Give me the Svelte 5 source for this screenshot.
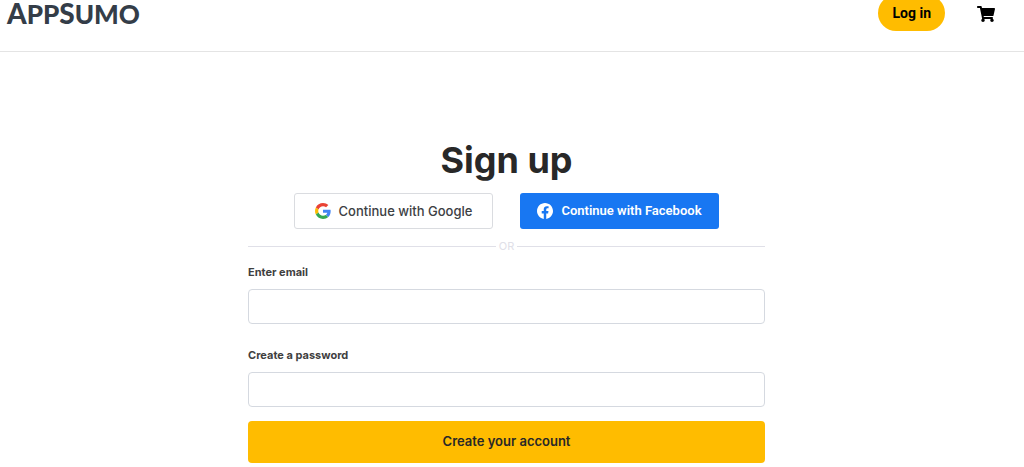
<script lang="ts">
  let email = $state('');
  let password = $state('');

  function submit(event: SubmitEvent) {
    event.preventDefault();
  }
</script>

<header class="site-header">
  <a class="logo" href="/" aria-label="AppSumo">A<span>PP</span>S<span>UMO</span></a>
  <nav class="actions">
    <button class="login" type="button">Log in</button>
    <a class="cart" href="/cart" aria-label="Cart">
      <svg viewBox="0 0 576 512" width="18" height="16" aria-hidden="true">
        <path
          d="M528.1 301.3l47.3-208C578.800 78.300 567.400 64 552 64H159.200l-9.200-44.800C147.800 8 137.900 0 126.500 0H24C10.700 0 0 10.700 0 24v16c0 13.300 10.700 24 24 24h69.900l70.200 343.400C147.300 417.100 136 435.200 136 456c0 30.900 25.100 56 56 56s56-25.100 56-56c0-15.700-6.400-29.800-16.800-40h209.600C430.400 426.200 424 440.300 424 456c0 30.900 25.100 56 56 56s56-25.100 56-56c0-22.200-12.900-41.300-31.600-50.400l5.500-24.300c3.400-15-8-29.300-23.400-29.300H218.100l-6.500-32h293.100c11.200 0 20.900-7.800 23.400-18.700z"
        />
      </svg>
    </a>
  </nav>
</header>

<main class="signup">
  <form class="signup-form" onsubmit={submit}>
    <h1>Sign up</h1>

    <div class="social">
      <button class="social-btn google" type="button">
        <svg viewBox="0 0 48 48" width="16" height="16" aria-hidden="true">
          <path fill="#ea4335" d="M24 9.500c3.540 0 6.710 1.220 9.210 3.600l6.850-6.850C35.900 2.380 30.470 0 24 0 14.620 0 6.510 5.380 2.560 13.220l7.980 6.190C12.430 13.720 17.740 9.500 24 9.500z" />
          <path fill="#4285f4" d="M46.980 24.550c0-1.570-.15-3.090-.38-4.550H24v9.020h12.940c-.58 2.960-2.260 5.480-4.780 7.180l7.730 6c4.510-4.180 7.090-10.360 7.090-17.650z" />
          <path fill="#fbbc05" d="M10.530 28.590c-.48-1.450-.76-2.990-.76-4.590s.27-3.140.76-4.590l-7.980-6.190C.92 16.460 0 20.120 0 24s.92 7.540 2.560 10.780l7.970-6.190z" />
          <path fill="#34a853" d="M24 48c6.480 0 11.930-2.130 15.890-5.810l-7.730-6c-2.150 1.450-4.920 2.300-8.160 2.300-6.260 0-11.570-4.220-13.470-9.910l-7.980 6.190C6.510 42.620 14.620 48 24 48z" />
        </svg>
        Continue with Google
      </button>
      <button class="social-btn facebook" type="button">
        <svg viewBox="0 0 24 24" width="16" height="16" aria-hidden="true">
          <path fill="#fff" d="M24 12.073C24 5.405 18.627 0 12 0S0 5.405 0 12.073C0 18.100 4.388 23.094 10.125 24v-8.437H7.078v-3.490h3.047V9.413c0-3.026 1.792-4.697 4.533-4.697 1.312 0 2.686.236 2.686.236v2.971H15.830c-1.491 0-1.956.931-1.956 1.886v2.264h3.328l-.532 3.490h-2.796V24C19.612 23.094 24 18.100 24 12.073z" />
        </svg>
        Continue with Facebook
      </button>
    </div>

    <div class="divider"><span>OR</span></div>

    <label for="email">Enter email</label>
    <input id="email" type="email" autocomplete="email" bind:value={email} />

    <label for="password">Create a password</label>
    <input id="password" type="password" autocomplete="new-password" bind:value={password} />

    <button class="submit" type="submit">Create your account</button>
  </form>
</main>

<style>
  :global(body) {
    margin: 0;
    background: #fff;
    color: #282828;
    font-family: Inter, 'Open Sans', sans-serif;
    overflow-x: hidden;
  }

  /* the bar starts slightly above the top of the page */
  .site-header {
    display: flex;
    align-items: flex-start;
    justify-content: space-between;
    box-sizing: border-box;
    height: 57px;
    margin-top: -5px;
    padding: 0 29px 0 7px;
    border-bottom: 1px solid #e4e4e4;
  }

  .logo {
    padding-top: 2px;
    color: #343d48;
    font-family: Lato, sans-serif;
    font-size: 28px;
    font-weight: 900;
    line-height: 32px;
    text-decoration: none;
  }

  .logo span {
    font-size: 26px;
  }

  .actions {
    display: flex;
    align-items: center;
    gap: 32px;
  }

  button {
    border: 0;
    cursor: pointer;
  }

  .login {
    height: 36px;
    padding: 0 14px;
    border-radius: 18px;
    background: #ffbc00;
    color: #000;
    font-family: Roboto, sans-serif;
    font-size: 14px;
    font-weight: 700;
  }

  .cart {
    display: flex;
    padding-top: 2px;
    color: #000;
  }

  .cart svg {
    fill: currentColor;
  }

  .signup {
    padding: 86px 11px 0 0;
  }

  .signup-form {
    display: flex;
    flex-direction: column;
    max-width: 517px;
    margin: 0 auto;
  }

  h1 {
    margin: 0 0 11px;
    font-size: 36px;
    font-weight: 700;
    line-height: 44px;
    text-align: center;
  }

  .social {
    display: flex;
    justify-content: center;
    gap: 27px;
  }

  .social-btn {
    display: flex;
    align-items: center;
    justify-content: center;
    gap: 8px;
    box-sizing: border-box;
    width: 199px;
    height: 36px;
    padding: 0;
    border-radius: 3px;
    font-size: 13px;
  }

  .google {
    border: 1px solid #dadce0;
    background: #fff;
    color: #3c4043;
    font-family: Inter, sans-serif;
    font-weight: 500;
  }

  .facebook {
    padding-bottom: 1px;
    background: #1877f2;
    color: #fff;
    font-family: Roboto, sans-serif;
    font-weight: 600;
  }

  .divider {
    display: flex;
    align-items: center;
    gap: 3px;
    margin: 9px 0 10px;
    color: #e0e0e8;
    font-size: 11px;
    line-height: 16px;
  }

  .divider::before,
  .divider::after {
    content: '';
    flex: 1;
    height: 1px;
    background: #e0e0e8;
  }

  label {
    margin-bottom: 9px;
    color: #3f3f3f;
    font-size: 11px;
    font-weight: 700;
    line-height: 16px;
  }

  input {
    box-sizing: border-box;
    width: 100%;
    height: 35px;
    margin: 0 0 23px;
    padding: 0 12px;
    border: 1px solid #d5d9e0;
    border-radius: 4px;
    background: #fff;
    font: inherit;
    font-size: 14px;
  }

  #password {
    margin-bottom: 14px;
  }

  .submit {
    height: 42px;
    padding-bottom: 3px;
    border-radius: 4px;
    background: #ffbc00;
    color: #282828;
    font-family: inherit;
    font-size: 13px;
    font-weight: 600;
  }
</style>
